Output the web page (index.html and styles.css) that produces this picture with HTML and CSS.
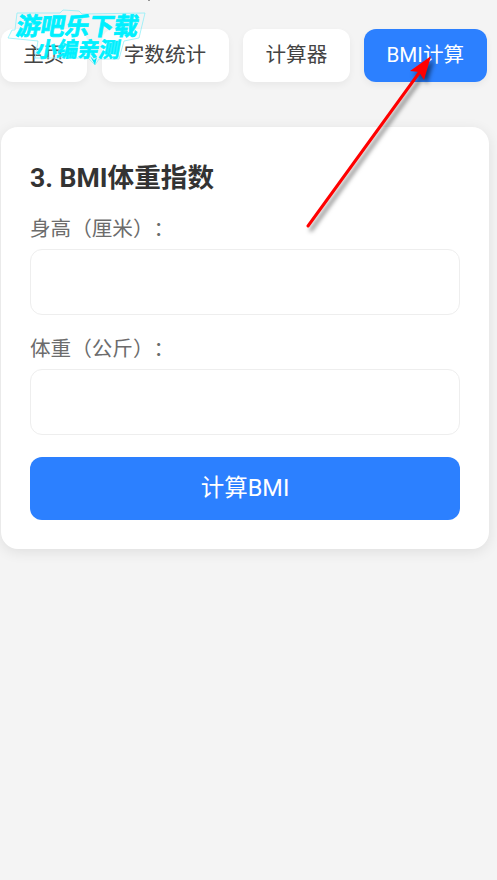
FILE: index.html
```html
<!DOCTYPE html>
<html lang="zh-CN">
<head>
<meta charset="UTF-8">
<title>BMI计算</title>
<link rel="stylesheet" href="styles.css">
</head>
<body>
<nav class="tabs">
  <button class="tab">主页</button>
  <button class="tab">字数统计</button>
  <button class="tab">计算器</button>
  <button class="tab active">BMI计算</button>
</nav>
<main class="card">
  <h2>3. BMI体重指数</h2>
  <label for="height">身高（厘米）：</label>
  <input id="height" type="text">
  <label for="weight">体重（公斤）：</label>
  <input id="weight" type="text">
  <button class="submit">计算BMI</button>
</main>
<svg class="watermark" width="160" height="72" viewBox="0 0 160 72">
  <path class="plate" d="M17 13H60L63 10L79 11L82 14L145 13L139 38L124 41L119 59H99L95 65L88 58H35L38 41L8 38L12 30H15Z"/>
  <g class="mark">
    <text x="0" y="0" font-size="24.5" textLength="122" transform="translate(15 35) skewX(-10)">游吧乐下载</text>
    <text x="0" y="0" font-size="21" textLength="84" transform="translate(35 56.5) skewX(-10)">小编亲测</text>
  </g>
  <path class="tip" d="M90 56L95 65L97 57L94 60Z"/>
  <path class="speck" d="M149 0V1"/>
</svg>
<svg class="pointer" width="150" height="190" viewBox="0 0 150 190">
  <path class="shaft" d="M8 176L119 23"/>
  <path class="head" d="M131 6L124 30L119 22L110 21Z"/>
</svg>
</body>
</html>
```
FILE: styles.css
```css
* { box-sizing: border-box; }
body {
  margin: 0;
  padding: 29px 7px 0 1px;
  min-height: 880px;
  background: #f4f4f4;
  color: #333;
  font-family: Roboto, "Noto Sans CJK SC", sans-serif;
  text-spacing-trim: space-all;
  position: relative;
  overflow: hidden;
}
button { font-family: inherit; border: 0; margin: 0; white-space: nowrap; }
.tabs { display: flex; gap: 14.4px; height: 53px; }
.tab {
  flex: none;
  padding: 0 22.8px 5px 22.2px;
  border-radius: 12px;
  background: #fff;
  color: #444;
  font-size: 20.6px;
  box-shadow: 0 3px 7px rgba(0, 0, 0, .05);
}
.tab.active { background: #2c80ff; color: #fff; padding-left: 22px; padding-right: 23px; }
.card {
  display: flex;
  flex-direction: column;
  width: 488px;
  height: 422.5px;
  margin-top: 44.5px;
  padding: 34px 29px 29px;
  border-radius: 17px;
  background: #fff;
  box-shadow: 0 3px 14px rgba(0, 0, 0, .09);
}
h2 { margin: 0; font-size: 26.6px; line-height: 34px; font-weight: 700; }
label { margin-top: 19px; font-size: 20.6px; line-height: 30px; color: #6c6c6c; }
input {
  height: 66px;
  margin: 5px 0 0;
  border: 1px solid #eee;
  border-radius: 12px;
  background: #fff;
}
.submit {
  height: 63px;
  margin-top: 22px;
  padding: 0 0 4px;
  border-radius: 12px;
  background: #2c80ff;
  color: #fff;
  font-size: 23.5px;
}
.watermark { position: absolute; left: 0; top: 0; }
.plate { fill: #f4f4f4; fill-opacity: .2; stroke: #8feff7; stroke-width: .8; }
.mark text {
  font-family: "Noto Sans CJK SC", sans-serif;
  font-weight: 700;
  fill: #00f0ff;
  stroke: #00f0ff;
  stroke-width: .7;
}
.tip { fill: #00e8f8; }
.speck { stroke: #777; stroke-width: 1.5; }
.pointer { position: absolute; left: 300px; top: 50px; filter: drop-shadow(3px 4px 2px rgba(0, 0, 0, .5)); }
.shaft { fill: none; stroke: #f00; stroke-width: 3; stroke-linecap: round; }
.head { fill: #f00; }
```
